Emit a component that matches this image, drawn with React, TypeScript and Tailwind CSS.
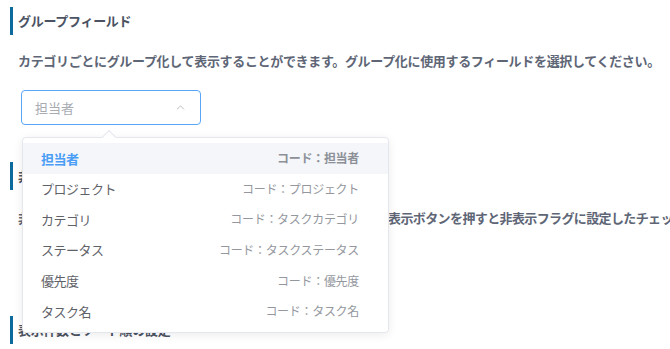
import { ChevronUp } from "lucide-react";

const options = [
  { label: "担当者", code: "担当者" },
  { label: "プロジェクト", code: "プロジェクト" },
  { label: "カテゴリ", code: "タスクカテゴリ" },
  { label: "ステータス", code: "タスクステータス" },
  { label: "優先度", code: "優先度" },
  { label: "タスク名", code: "タスク名" },
];

function SectionTitle({ children }: { children: React.ReactNode }) {
  return (
    <div className="ml-[10px] flex h-[28px] items-center border-l-[3px] border-[#0d6a9c] pl-[5px] text-[13px] font-bold tracking-[-0.3px] text-[#4b5262]">
      {children}
    </div>
  );
}

export default function App() {
  const selected = 0;

  return (
    <div
      className="relative h-[349px] w-full overflow-hidden bg-white"
      style={{ fontFamily: '"Noto Sans CJK JP", "Noto Sans", sans-serif' }}
    >
      <section className="pt-[7px]">
        <SectionTitle>グループフィールド</SectionTitle>
        <p className="ml-[18px] mt-[16px] whitespace-nowrap text-[13px] font-bold leading-[20px] tracking-[-0.33px] text-[#5e6676]">
          カテゴリごとにグループ化して表示することができます。グループ化に使用するフィールドを選択してください。
        </p>

        <div className="relative ml-[21px] mt-[19px] w-[180px]">
          <button
            type="button"
            className="flex h-[35px] w-full items-center justify-between rounded-[4px] border border-[#5aa5f5] bg-white pl-[13px] pr-[13px] text-[13px] text-[#a8abb2]"
          >
            <span>担当者</span>
            <ChevronUp size={13} strokeWidth={1.4} className="text-[#a8abb2]" />
          </button>

          <div className="absolute left-[1px] top-[47px] z-10 w-[367px] rounded-[4px] border border-[#e4e7ed] bg-white py-[5px] shadow-[0_2px_10px_rgba(0,0,0,0.08)]">
            <span className="absolute left-[81px] top-[-6px] h-[10px] w-[10px] rotate-45 border-l border-t border-[#e4e7ed] bg-white" />
            <ul className="relative">
              {options.map((o, i) => (
                <li
                  key={o.label}
                  className={
                    "flex h-[30.6px] items-center justify-between pl-[18px] pr-[29px] " +
                    (i === selected ? "bg-[#f4f6fa]" : "")
                  }
                >
                  <span
                    className={
                      "text-[13px] tracking-[-0.5px] " +
                      (i === selected ? "font-bold text-[#4a9df5]" : "text-[#5f6269]")
                    }
                  >
                    {o.label}
                  </span>
                  <span
                    className={
                      "text-[12px] tracking-[-0.3px] " +
                      (i === selected ? "font-bold text-[#8d9097]" : "text-[#94979e]")
                    }
                  >
                    コード：{o.code}
                  </span>
                </li>
              ))}
            </ul>
          </div>
        </div>
      </section>

      <section className="mt-[37px]">
        <SectionTitle>非表示フィールド</SectionTitle>
        <p className="ml-[18px] mt-[18px] whitespace-nowrap text-[13px] font-bold leading-[20px] tracking-[-0.62px] text-[#5e6676]">
          非表示にしたいレコードを設定することができます。一覧画面の非表示ボタンを押すと非表示フラグに設定したチェックボックスがオンのレコードを非表示にします。
        </p>
      </section>

      <section className="mt-[88px]">
        <SectionTitle>表示件数とソート順の設定</SectionTitle>
      </section>
    </div>
  );
}
